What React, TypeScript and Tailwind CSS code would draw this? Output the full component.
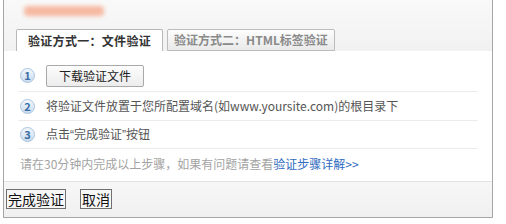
import React from 'react'

const font = { fontFamily: '"Noto Sans CJK SC", "Liberation Sans", sans-serif' }

function StepNum({ n }: { n: number }) {
  return (
    <span className="flex h-[15px] w-[15px] shrink-0 items-center justify-center rounded-full border border-[#a9c4e0] bg-gradient-to-b from-[#f4f8fc] to-[#c9dbee] text-[11px] font-bold leading-none text-[#3a6ea5]">
      {n}
    </span>
  )
}

export default function App() {
  return (
    <div className="h-[224px] w-[506px] overflow-hidden bg-white text-[12px]" style={font}>
      <div className="ml-[3px] flex h-[218px] w-[490px] flex-col border-x border-b border-[#a6a6a6]">
        {/* Header with tabs */}
        <div className="relative h-[51px] shrink-0 bg-gradient-to-b from-[#f9f9f9] to-[#f1f1f1]">
          <div className="absolute left-[20px] top-[6px] h-[10px] w-[80px] rounded-sm bg-[#f6b8a0] blur-[2px]" />
          <div className="absolute bottom-0 left-[12px] flex items-end gap-[4px]">
            <div className="flex h-[22px] w-[147px] items-center justify-center rounded-t-[2px] border border-b-0 border-[#b8b8b8] bg-white text-[12px] font-bold tracking-[0.3px] text-[#333]">
              验证方式一：文件验证
            </div>
            <div className="flex h-[22px] w-[168px] items-center justify-center rounded-t-[2px] border border-[#bcbcbc] bg-gradient-to-b from-[#fdfdfd] to-[#e9e9e9] text-[12px] font-bold text-[#8a8a8a]">
              验证方式二：HTML标签验证
            </div>
          </div>
        </div>

        {/* Steps */}
        <div className="flex-1 bg-white px-[14px] pt-[13px]">
          <div className="flex h-[28px] items-center gap-[11px] border-b border-[#ececec] pb-[4px] pl-[2px]">
            <StepNum n={1} />
            <button className="h-[22px] w-[98px] rounded-[2px] border border-[#a9a9a9] bg-gradient-to-b from-[#fdfdfd] to-[#ececec] text-[12px] text-[#222]">
              下载验证文件
            </button>
          </div>
          <div className="flex h-[29px] items-center gap-[11px] border-b border-[#ececec] pl-[2px] text-[#555]">
            <StepNum n={2} />
            <span>将验证文件放置于您所配置域名(如www.yoursite.com)的根目录下</span>
          </div>
          <div className="flex h-[28px] items-center gap-[11px] border-b border-[#ececec] pl-[2px] text-[#555]">
            <StepNum n={3} />
            <span>
              点击<span className="font-['Liberation_Sans']">“</span>完成验证<span className="font-['Liberation_Sans']">”</span>按钮
            </span>
          </div>
          <div className="flex h-[29px] items-center pl-[2px] text-[#a3a3a3]">
            请在30分钟内完成以上步骤，如果有问题请查看
            <a className="text-[#2f6bbf]">验证步骤详解&gt;&gt;</a>
          </div>
        </div>

        {/* Footer */}
        <div className="flex h-[36px] shrink-0 items-center gap-[14px] border-t border-[#e3e3e3] bg-gradient-to-b from-[#f7f7f7] to-[#f0f0f0] pl-[2px] pb-[2px]">
          <button className="h-[20px] border border-[#707070] bg-[#f6f6f6] px-[1px] text-[14px] leading-none text-[#111]">
            完成验证
          </button>
          <button className="h-[20px] border border-[#707070] bg-[#f6f6f6] px-[1px] text-[14px] leading-none text-[#111]">
            取消
          </button>
        </div>
      </div>
    </div>
  )
}
